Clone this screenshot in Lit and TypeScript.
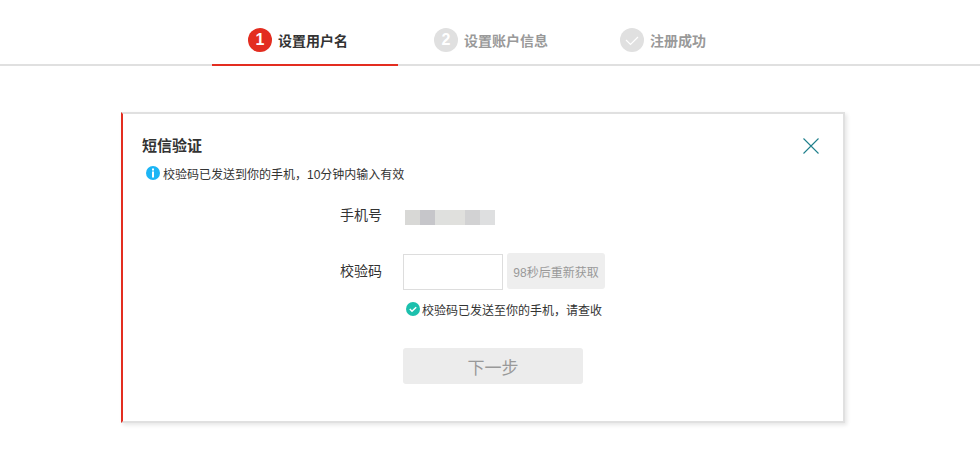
import { LitElement, html, css } from "lit";
import { customElement } from "lit/decorators.js";

// blurred phone number, one colour per mosaic block
const PHONE_BLOCKS = ["#d8d8d6", "#c6c6ca", "#dfe0de", "#e0e0dd", "#d2d2d3", "#dedfe0"];

@customElement("app-root")
export class AppRoot extends LitElement {
  static styles = css`
    :host {
      display: block;
      height: 458px;
      overflow: hidden;
      background: #fff;
      font-family: "Liberation Sans", "Noto Sans CJK SC", sans-serif;
      color: #333;
    }
    .steps {
      display: flex;
      height: 64px;
      padding-left: 212px;
      border-bottom: 2px solid #e0e0e0;
    }
    .step {
      display: flex;
      align-items: center;
      gap: 6px;
      box-sizing: border-box;
      width: 186px;
      height: 66px;
      padding: 16px 0 0 36px;
      border-bottom: 2px solid transparent;
      font-size: 14px;
      font-weight: 700;
      color: #999;
    }
    .step.active {
      color: #333;
      border-bottom-color: #e32d20;
    }
    .num {
      display: flex;
      align-items: center;
      justify-content: center;
      width: 24px;
      height: 24px;
      border-radius: 50%;
      background: #e0e0e0;
      color: #fff;
      font-size: 16px;
      font-weight: 700;
    }
    .active .num {
      background: #e32d20;
    }
    .card {
      box-sizing: border-box;
      width: 724px;
      height: 311px;
      margin: 46px 0 0 121px;
      padding: 21px 20px 0 19px;
      border: 2px solid #e0e0e0;
      border-left-color: #e32d20;
      box-shadow: 2px 2px 4px rgba(0, 0, 0, 0.1);
    }
    .head {
      display: flex;
      justify-content: space-between;
      align-items: flex-start;
    }
    h2 {
      margin: 1px 0 0;
      font-size: 15px;
      line-height: 20px;
      font-weight: 700;
      color: #333;
    }
    .close {
      display: block;
      margin: 3px 4px 0 0;
    }
    .tip {
      display: flex;
      align-items: center;
      gap: 3px;
      margin: 8px 0 0 4px;
      height: 18px;
      font-size: 12px;
      color: #333;
    }
    .row {
      display: flex;
      align-items: center;
    }
    .label {
      width: 240px;
      text-align: right;
      font-size: 14px;
      color: #333;
    }
    .phone-row {
      height: 16px;
      margin-top: 24px;
    }
    .phone {
      display: flex;
      margin: 7px 0 0 23px;
    }
    .phone i {
      display: block;
      width: 15px;
      height: 15px;
    }
    .code-row {
      margin-top: 31px;
    }
    .code-row .label {
      margin-bottom: 4px;
    }
    input {
      box-sizing: border-box;
      width: 100px;
      height: 36px;
      margin-left: 21px;
      padding: 0 6px;
      border: 1px solid #ddd;
      outline: none;
      background: #fff;
    }
    .resend {
      width: 98px;
      height: 36px;
      margin: 0 0 2px 4px;
      padding: 0;
      border: 0;
      border-radius: 3px;
      background: #eee;
      color: #999;
      font: inherit;
      font-size: 12px;
    }
    .ok {
      display: flex;
      align-items: center;
      gap: 2px;
      height: 18px;
      margin: 9px 0 0 264px;
      font-size: 12px;
      color: #333;
    }
    .next {
      display: block;
      width: 180px;
      height: 36px;
      margin: 30px 0 0 261px;
      padding: 0;
      border: 0;
      border-radius: 3px;
      background: #ececec;
      color: #999;
      font: inherit;
      font-size: 17px;
    }
    svg {
      flex: none;
    }
  `;

  render() {
    return html`
      <div class="steps">
        <div class="step active"><span class="num">1</span>设置用户名</div>
        <div class="step"><span class="num">2</span>设置账户信息</div>
        <div class="step">
          <span class="num">
            <svg width="24" height="24" viewBox="0 0 24 24" fill="none">
              <path d="M6 12l4.5 4.5L18 9" stroke="#fff" stroke-width="1.2" />
            </svg>
          </span>
          注册成功
        </div>
      </div>

      <div class="card">
        <div class="head">
          <h2>短信验证</h2>
          <svg class="close" width="16" height="16" viewBox="0 0 16 16" fill="none">
            <path d="M.5.5l15 15M15.5.5l-15 15" stroke="#1f7f8c" stroke-width="1.1" />
          </svg>
        </div>
        <div class="tip">
          <svg width="14" height="14" viewBox="0 0 14 14">
            <circle cx="7" cy="7" r="7" fill="#1cb5f5" />
            <rect x="6" y="2.5" width="2" height="2" fill="#fff" />
            <rect x="6" y="5.5" width="2" height="6" fill="#fff" />
          </svg>
          校验码已发送到你的手机，10分钟内输入有效
        </div>

        <div class="row phone-row">
          <div class="label">手机号</div>
          <div class="phone">
            ${PHONE_BLOCKS.map((c) => html`<i style="background:${c}"></i>`)}
          </div>
        </div>

        <div class="row code-row">
          <div class="label">校验码</div>
          <input type="text" />
          <button class="resend">98秒后重新获取</button>
        </div>
        <div class="ok">
          <svg width="14" height="14" viewBox="0 0 14 14" fill="none">
            <circle cx="7" cy="7" r="7" fill="#1cc0ad" />
            <path d="M3.8 7l2.2 2.2 4.2-4" stroke="#fff" stroke-width="1.5" />
          </svg>
          校验码已发送至你的手机，请查收
        </div>

        <button class="next">下一步</button>
      </div>
    `;
  }
}
